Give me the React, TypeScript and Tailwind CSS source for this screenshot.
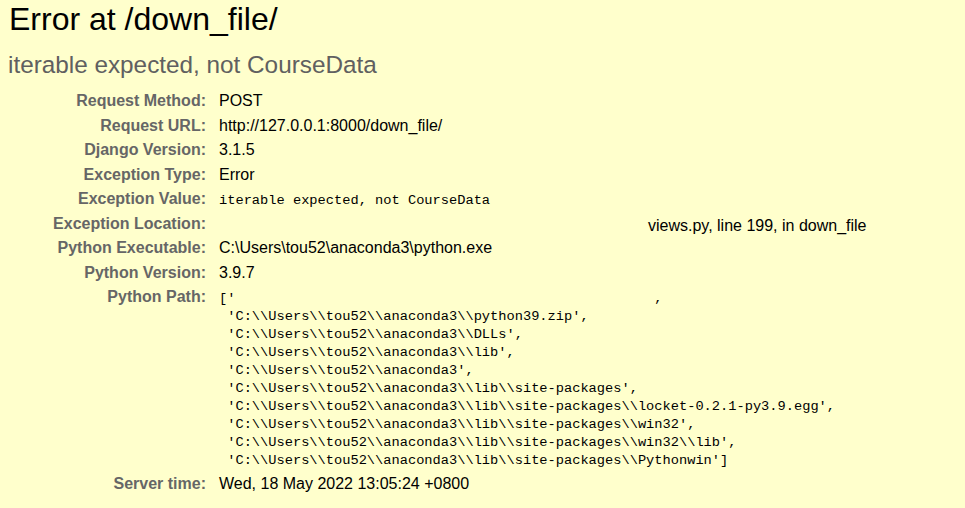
const meta: [string, React.ReactNode][] = [
  ["Request Method:", "POST"],
  ["Request URL:", "http://127.0.0.1:8000/down_file/"],
  ["Django Version:", "3.1.5"],
  ["Exception Type:", "Error"],
  [
    "Exception Value:",
    <span className="font-['Liberation_Mono',monospace] text-[13.7px] leading-none">
      iterable expected, not CourseData
    </span>,
  ],
  [
    "Exception Location:",
    <span className="pl-[429px] relative top-[2px]">views.py, line 199, in down_file</span>,
  ],
  ["Python Executable:", "C:\\Users\\tou52\\anaconda3\\python.exe"],
  ["Python Version:", "3.9.7"],
]

const pythonPath = [
  "['" + " ".repeat(51) + ",",
  " 'C:\\\\Users\\\\tou52\\\\anaconda3\\\\python39.zip',",
  " 'C:\\\\Users\\\\tou52\\\\anaconda3\\\\DLLs',",
  " 'C:\\\\Users\\\\tou52\\\\anaconda3\\\\lib',",
  " 'C:\\\\Users\\\\tou52\\\\anaconda3',",
  " 'C:\\\\Users\\\\tou52\\\\anaconda3\\\\lib\\\\site-packages',",
  " 'C:\\\\Users\\\\tou52\\\\anaconda3\\\\lib\\\\site-packages\\\\locket-0.2.1-py3.9.egg',",
  " 'C:\\\\Users\\\\tou52\\\\anaconda3\\\\lib\\\\site-packages\\\\win32',",
  " 'C:\\\\Users\\\\tou52\\\\anaconda3\\\\lib\\\\site-packages\\\\win32\\\\lib',",
  " 'C:\\\\Users\\\\tou52\\\\anaconda3\\\\lib\\\\site-packages\\\\Pythonwin']",
]

function Row({ label, children }: { label: string; children: React.ReactNode }) {
  return (
    <div className="flex leading-[24.45px]">
      <div className="w-[206px] shrink-0 text-right font-bold text-[#666]">{label}</div>
      <div className="pl-[13px] text-black">{children}</div>
    </div>
  )
}

export default function App() {
  return (
    <div className="min-h-screen bg-[#ffffcc] font-['Liberation_Sans',Arial,sans-serif] text-[16px]">
      {/* Summary */}
      <h1 className="pl-[9px] text-[32px] leading-[38px] font-normal text-black">
        Error at /down_file/
      </h1>
      <h2 className="mt-[12px] pl-[8px] text-[24.3px] leading-[30px] text-[#606060]">
        iterable expected, not CourseData
      </h2>

      {/* Meta table */}
      <div className="mt-[9.4px]">
        {meta.map(([label, value]) => (
          <Row key={label} label={label}>
            {value}
          </Row>
        ))}
        <Row label="Python Path:">
          <pre className="pt-[5px] font-['Liberation_Mono',monospace] text-[13.7px] leading-[17.95px] whitespace-pre">
            {pythonPath.join("\n")}
          </pre>
        </Row>
        <div className="mt-[2px]">
          <Row label="Server time:">Wed, 18 May 2022 13:05:24 +0800</Row>
        </div>
      </div>
    </div>
  )
}
